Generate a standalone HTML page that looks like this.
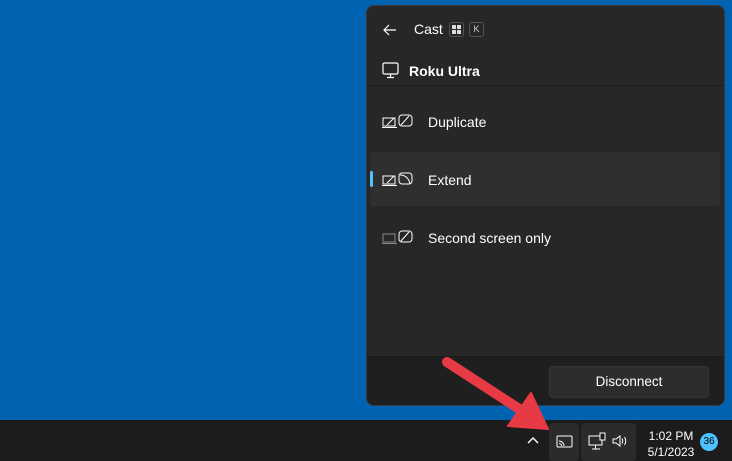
<!DOCTYPE html>
<html><head><style>
*{margin:0;padding:0;box-sizing:border-box}
body{width:732px;height:461px;background:#0063b1;position:relative;overflow:hidden;font-family:"Segoe UI","Liberation Sans",sans-serif;color:#fff}
.panel{position:absolute;left:366px;top:5px;width:359px;height:401px;background:#272727;border:1px solid #3a3a3a;border-radius:8px;overflow:hidden}
.foot{position:absolute;left:0;right:0;bottom:0;height:49px;background:#1f1f1f;border-top:1px solid #1a1a1a}
.btn{position:absolute;left:182px;top:9px;width:160px;height:32px;background:#2d2d2d;border:1px solid #353535;border-radius:4px;font-size:13.5px;text-align:center;line-height:30px}
.t{position:absolute;font-size:14px}
.key{position:absolute;width:15px;height:15px;border:1px solid #555;border-radius:3px;font-size:9px;text-align:center;line-height:13px;color:#ccc}
.sel{position:absolute;left:3px;top:146px;width:350px;height:54px;background:#2f2f2f;border-radius:4px}
.bar{position:absolute;left:3px;top:165px;width:3px;height:16px;background:#4cc2ff;border-radius:2px}
.task{position:absolute;left:0;top:420px;width:732px;height:41px;background:#1c1c1c}
</style></head><body>
<div class="panel">
<svg style="position:absolute;left:15px;top:17px" width="16" height="14" viewBox="0 0 16 14"><path d="M14 7H2M7 2L2 7l5 5" stroke="#fff" stroke-width="1.2" fill="none"/></svg>
<div class="t" style="left:47px;top:15px">Cast</div>
<div class="key" style="left:82px;top:16px"><svg width="9" height="9" viewBox="0 0 9 9" style="margin-top:2px"><rect x="0" y="0" width="4" height="4" fill="#ddd"/><rect x="5" y="0" width="4" height="4" fill="#ddd"/><rect x="0" y="5" width="4" height="4" fill="#ddd"/><rect x="5" y="5" width="4" height="4" fill="#ddd"/></svg></div>
<div class="key" style="left:102px;top:16px">K</div>
<svg style="position:absolute;left:15px;top:56px" width="18" height="18" viewBox="0 0 18 18"><rect x="1" y="1" width="15" height="11" rx="1.5" stroke="#fff" stroke-width="1.2" fill="none"/><path d="M8.5 12v3M5 15.5h7" stroke="#fff" stroke-width="1.2"/></svg>
<div class="t" style="left:42px;top:57px;font-weight:bold">Roku Ultra</div>
<div style="position:absolute;left:0;right:0;top:79px;height:1px;background:#1c1c1c"></div>
<div class="sel"></div><div class="bar"></div>
<svg style="position:absolute;left:15px;top:108px" width="36" height="14" viewBox="0 0 36 14"><rect x="1" y="4" width="12" height="8" stroke="#fff" fill="none"/><path d="M0 13.5h15M5 11l7-7" stroke="#fff"/><rect x="17" y="1" width="13" height="11" rx="3" stroke="#fff" fill="none"/><path d="M19 11l8-9" stroke="#fff"/></svg>
<div class="t" style="left:61px;top:108px">Duplicate</div>
<svg style="position:absolute;left:15px;top:166px" width="36" height="14" viewBox="0 0 36 14"><rect x="1" y="4" width="12" height="8" stroke="#fff" fill="none"/><path d="M0 13.5h15M5 11l7-7" stroke="#fff"/><rect x="17" y="1" width="13" height="11" rx="3" stroke="#fff" fill="none"/><path d="M18 3q8 0 10 9" stroke="#fff" fill="none"/></svg>
<div class="t" style="left:61px;top:166px">Extend</div>
<svg style="position:absolute;left:15px;top:224px" width="36" height="14" viewBox="0 0 36 14"><rect x="1" y="4" width="12" height="8" stroke="#888" fill="none"/><path d="M0 13.5h15" stroke="#888"/><rect x="17" y="1" width="13" height="11" rx="3" stroke="#fff" fill="none"/><path d="M19 11l8-9" stroke="#fff"/></svg>
<div class="t" style="left:61px;top:224px">Second screen only</div>
<div class="foot"><div class="btn">Disconnect</div></div>
</div>
<div class="task">
<svg style="position:absolute;left:527px;top:16px" width="12" height="8" viewBox="0 0 12 8"><path d="M1 7l5-5 5 5" stroke="#fff" stroke-width="1.4" fill="none"/></svg>
<div style="position:absolute;left:549px;top:3px;width:30px;height:38px;background:#2b2b2b;border-radius:4px"></div>
<svg style="position:absolute;left:556px;top:15px" width="18" height="13" viewBox="0 0 18 13"><rect x="1" y="1" width="15" height="11" rx="1" stroke="#fff" fill="none"/><path d="M3 6a5 5 0 015 5M3 8.5a2.5 2.5 0 012.5 2.5" stroke="#fff" fill="none"/></svg>
<div style="position:absolute;left:581px;top:3px;width:55px;height:38px;background:#2b2b2b;border-radius:4px"></div>
<svg style="position:absolute;left:588px;top:12px" width="20" height="19" viewBox="0 0 20 19"><rect x="1" y="4" width="13" height="9" stroke="#fff" fill="none"/><path d="M7.5 13v4M4 17h8" stroke="#fff"/><rect x="12" y="1" width="5" height="7" fill="#1c1c1c" stroke="#fff"/></svg>
<svg style="position:absolute;left:612px;top:14px" width="16" height="14" viewBox="0 0 16 14"><path d="M1 5h3l4-3v10l-4-3H1z" stroke="#fff" fill="none"/><path d="M10 4.5q1.5 2.5 0 5M12.5 3q2.5 4 0 8" stroke="#fff" fill="none"/></svg>
<div style="position:absolute;left:640px;top:8px;width:62px;text-align:center;font-size:12px;line-height:16px">1:02 PM<br>5/1/2023</div>
<div style="position:absolute;left:700px;top:13px;width:18px;height:18px;border-radius:50%;background:#4cc2ff;color:#000;font-size:10px;text-align:center;line-height:18px">36</div>
</div>
<svg style="position:absolute;left:0;top:0" width="732" height="461"><path d="M447 362L527 414" stroke="#e83a44" stroke-width="10" stroke-linecap="round"/><path d="M508 426L548 429L531 393Z" fill="#e83a44" stroke="#e83a44" stroke-width="2" stroke-linejoin="round"/></svg>
</body></html>
